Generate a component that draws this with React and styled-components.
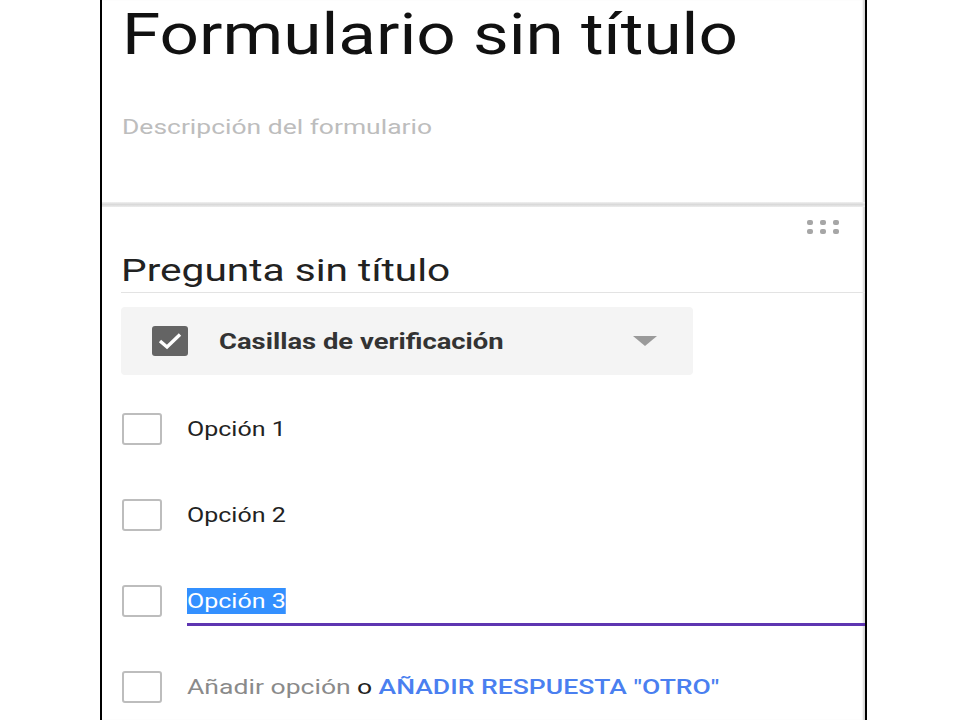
import React from 'react';
import styled, { createGlobalStyle } from 'styled-components';

const GlobalStyle = createGlobalStyle`
  html, body {
    margin: 0;
    padding: 0;
    background: #fff;
  }
  body {
    font-family: Roboto, "Noto Sans", Arial, sans-serif;
  }
`;

const Page = styled.div`
  width: 960px;
  height: 720px;
  overflow: hidden;
  background: #fff;
`;

const Card = styled.div`
  margin-left: 100px;
  width: 767px;
  height: 720px;
  box-sizing: border-box;
  border-left: 2px solid #000;
  border-right: 2px solid #000;
  box-shadow: inset -3px 0 2px -1px #d6d6d6;
  overflow: hidden;
`;

const Wide = styled.span`
  display: inline-block;
  white-space: nowrap;
  transform: scaleX(${(props) => props.$k || 1.2});
  transform-origin: left center;
`;

const Header = styled.div`
  padding: 0 0 0 20px;
  height: 202px;
  box-sizing: border-box;
`;

const Title = styled.h1`
  margin: 0;
  font-size: 58px;
  font-weight: 400;
  color: #111;
  line-height: normal;
`;

const Description = styled.div`
  margin-top: 47px;
  font-size: 21px;
  color: #bdbdbd;
`;

const Divider = styled.div`
  height: 5px;
  background: linear-gradient(#f0f0f0, #d9d9d9 50%, #ececec);
`;

const Question = styled.div`
  padding-left: 19px;
  display: flex;
  flex-direction: column;
`;

const DragHandle = styled.div`
  align-self: flex-end;
  margin: 13px 26px 0 0;
  display: grid;
  grid-template-columns: repeat(3, 6px);
  grid-auto-rows: 5px;
  column-gap: 7px;
  row-gap: 4px;
`;

const Dot = styled.span`
  background: #a6a6a6;
  border-radius: 2px;
`;

const QuestionTitle = styled.div`
  margin-top: 17px;
  font-size: 32px;
  color: #222;
  padding-bottom: 3px;
  border-bottom: 1px solid #e3e3e3;
`;

const TypeSelect = styled.div`
  margin-top: 14px;
  width: 572px;
  height: 68px;
  box-sizing: border-box;
  padding: 0 36px 0 31px;
  background: #f4f4f4;
  border-radius: 4px;
  display: flex;
  align-items: center;
`;

const TypeIcon = styled.span`
  width: 36px;
  height: 30px;
  border-radius: 3px;
  background: #646464;
  display: flex;
  align-items: center;
  justify-content: center;
`;

const TypeLabel = styled.span`
  flex: 1;
  margin-left: 31px;
  font-size: 22px;
  font-weight: 700;
  color: #333;
`;

const Caret = styled.span`
  width: 0;
  height: 0;
  border-left: 12px solid transparent;
  border-right: 12px solid transparent;
  border-top: 10px solid #9a9a9a;
`;

const Options = styled.div`
  margin-top: 11px;
  display: flex;
  flex-direction: column;
`;

const OptionRow = styled.div`
  height: 86px;
  display: flex;
  align-items: center;
`;

const Box = styled.span`
  width: 40px;
  height: 32px;
  box-sizing: border-box;
  margin-left: 1px;
  border: 2px solid #bdbdbd;
  border-radius: 3px;
  flex-shrink: 0;
`;

const OptionField = styled.div`
  position: relative;
  flex: 1;
  margin-left: 25px;
  height: 32px;
  display: flex;
  align-items: center;
  font-size: 21px;
  color: ${(props) => (props.muted ? '#8a8a8a' : '#222')};

  &::after {
    content: '';
    display: ${(props) => (props.active ? 'block' : 'none')};
    position: absolute;
    left: 0;
    right: 0;
    bottom: -9px;
    height: 3px;
    background: #5e35b1;
  }
`;

const Selected = styled.span`
  background: #3390ff;
  color: #fff;
  padding: 1px 0;
`;

const Or = styled.span`
  color: #222;
  margin: 0 5px;
`;

const OtherLink = styled.span`
  color: #4a7ff0;
  font-weight: 500;
`;

const App = () => {
  return (
    <Page>
      <GlobalStyle />
      <Card>
        <Header>
          <Title>
            <Wide $k={1.194}>Formulario sin título</Wide>
          </Title>
          <Description>
            <Wide $k={1.26}>Descripción del formulario</Wide>
          </Description>
        </Header>
        <Divider />

        <Question>
          <DragHandle>
            {[0, 1, 2, 3, 4, 5].map((i) => (
              <Dot key={i} />
            ))}
          </DragHandle>
          <QuestionTitle>
            <Wide $k={1.27}>Pregunta sin título</Wide>
          </QuestionTitle>

          <TypeSelect>
            <TypeIcon>
              <svg width="26" height="20" viewBox="0 0 26 20">
                <path d="M3 10l7 6L23 3.5" fill="none" stroke="#fff" strokeWidth="3.4" />
              </svg>
            </TypeIcon>
            <TypeLabel>
              <Wide $k={1.245}>Casillas de verificación</Wide>
            </TypeLabel>
            <Caret />
          </TypeSelect>

          <Options>
            <OptionRow>
              <Box />
              <OptionField>
                <Wide $k={1.19}>Opción 1</Wide>
              </OptionField>
            </OptionRow>
            <OptionRow>
              <Box />
              <OptionField>
                <Wide $k={1.19}>Opción 2</Wide>
              </OptionField>
            </OptionRow>
            <OptionRow>
              <Box />
              <OptionField active>
                <Wide $k={1.19}>
                  <Selected>Opción 3</Selected>
                </Wide>
              </OptionField>
            </OptionRow>
            <OptionRow>
              <Box />
              <OptionField muted>
                <Wide $k={1.265}>
                  Añadir opción<Or>o</Or>
                  <OtherLink>AÑADIR RESPUESTA "OTRO"</OtherLink>
                </Wide>
              </OptionField>
            </OptionRow>
          </Options>
        </Question>
      </Card>
    </Page>
  );
};

export default App;
